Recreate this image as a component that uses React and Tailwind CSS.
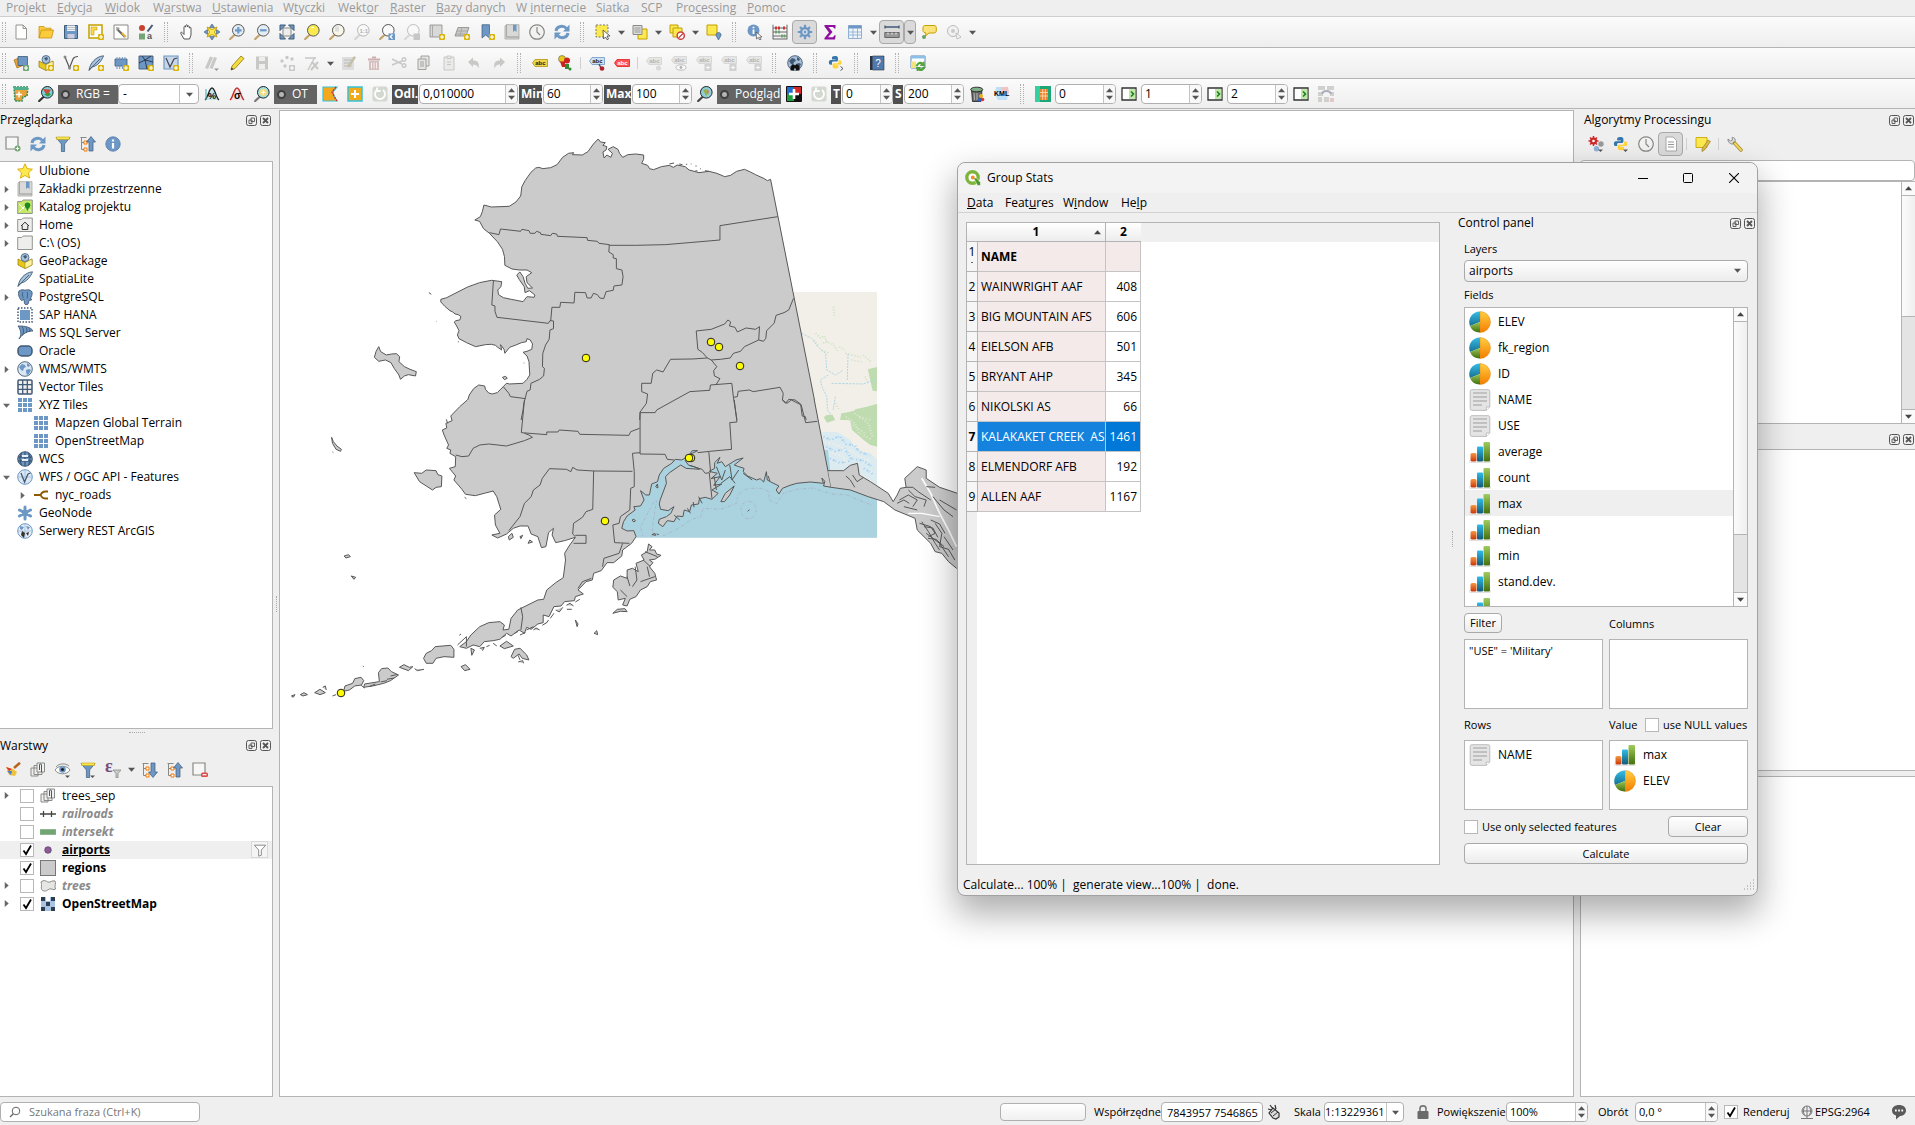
import React from "react";

/* ---------- icon parts ---------- */
const B = "#6d97c4";
const DB = "#415a75";
const Y = "#fce94f";
const YD = "#c4a000";
const G = "#c8c8c6";
const GD = "#888a85";

const Badge = ({ c = "#d8b40c" }) => (
  <g>
    <rect x="10" y="10" width="6" height="6" rx="1" fill={c} />
    <path d="M13 11v4M11 13h4" stroke="#fff" strokeWidth="1.2" />
  </g>
);
const Lens = ({ fill = "#fff", handle = "#c4a26a", stroke = "#555753", children }) => (
  <g>
    <path d="M6 10.5 1.2 15" stroke={handle} strokeWidth="2.2" strokeLinecap="round" />
    <circle cx="9.3" cy="6.3" r="5.8" fill={fill} stroke={stroke} strokeWidth="1" />
    {children}
  </g>
);
const Tag = ({ fill, stroke, color = "#222", y = 3 }) => (
  <g>
    <path d={`M.5 ${y + 4} 3 ${y}.5H15.5V${y + 7.5}H3Z`} fill={fill} stroke={stroke} strokeWidth=".8" />
    <text x="3.2" y={y + 6} fontSize="6" fontWeight="700" fill={color} fontFamily="Liberation Sans, sans-serif">abc</text>
  </g>
);
const Globe = ({ fill = "#dbe7f3", land = B }) => (
  <g>
    <circle cx="8" cy="8" r="7.3" fill={fill} stroke={DB} strokeWidth=".9" />
    <path d="M2 6l3-3 3 1 1 2-2 1-1 3-2-1ZM9 9l3-1 2 1-2 4-2 1-1-3ZM10 2l3 2-1 2-2-1Z" fill={land} />
  </g>
);
const Grid9 = () => (
  <g fill={B}>
    {[1, 6, 11].map((x) => [1, 6, 11].map((y) => <rect key={`${x}-${y}`} x={x} y={y} width="4" height="4" />))}
  </g>
);
const Sub = () => <path d="M10 13.500h5l-2.500 2.500z" fill="#555" />;
const Reload = ({ c = B }) => (
  <g fill="none" stroke={c} strokeWidth="3">
    <path d="M2 7C2.600 2 9.500 1 12.300 4.400" />
    <path d="M14 9C13.400 14 6.500 15 3.700 11.600" />
    <path d="M15.500 .5v7H9zM.5 15.500V8.500H7z" fill={c} stroke="none" />
  </g>
);
const FunnelI = () => (
  <g>
    <path d="M1 1.500h14L9.600 8v7.500H6.400V8Z" fill={B} stroke={DB} strokeWidth=".7" />
    <path d="M1.500 1h13v2.400h-13z" fill={Y} stroke={YD} strokeWidth=".6" />
  </g>
);
const TreeArrow = ({ up }) => (
  <g>
    <path d="M.5 1.500h6M1.500 1.500v12H5M1.500 6.500H5" fill="none" stroke={GD} />
    <path d="M4 5h3v3H4zM4 12h3v3H4z" fill="#fff" stroke="#f57900" />
    {up ? <path d="M11 .5 15.500 6H13v9H9V6H6.500Z" fill={B} stroke={DB} strokeWidth=".7" /> : <path d="M11 15.500 15.500 10H13V1H9v9H6.500Z" fill={B} stroke={DB} strokeWidth=".7" />}
  </g>
);
const Python = () => (
  <g>
    <path d="M8 1c-3 0-3.500 1-3.500 2.300V5h4v.7H3C1.500 5.700 1 7 1 8.500S1.600 11 3 11h1.500V9c0-1 .8-1.500 1.700-1.500h3.500c.9 0 1.600-.6 1.600-1.500V3.300C11.300 1.600 10 1 8 1Z" fill="#3776ab" />
    <path d="M8.500 15.500c3 0 3.400-1 3.400-2.300v-1.500H8V11h5.500c1.300 0 1.900-1.200 1.900-2.700S14.800 6 13.500 6H12v1.800c0 1-.8 1.600-1.700 1.600H6.800c-.9 0-1.600.6-1.600 1.500v2.300c0 1.600 1.300 2.300 3.300 2.300Z" fill="#ffd43b" />
  </g>
);
const Clock = () => <path d="M8 .8a7.200 7.200 0 1 0 .01 0ZM8 3v5l3 3" fill="#f2f2f2" stroke={GD} strokeWidth="1.200" />;
const Folder = () => <path d="M.7 2.500h4l1.500-1.500H15.300V14.500H.7Z" fill="#eeeeec" stroke={GD} strokeWidth=".9" />;
const Book = () => (
  <g>
    <path d="M1 2 2.500.7V13H15v2H1ZM2.500.7H15V13H2.500z" fill="#d9d9d7" stroke="#a5a5a3" strokeWidth=".8" />
    <path d="M9 .7h3.500V8l-1.800-1.600L9 8Z" fill={B} />
  </g>
);
const Feather = () => <path d="M1 15.500C2 8 8 1.500 15.500.8 14 5 10 11 4 12ZM1.200 15 12 4" fill="#a9c3df" stroke={DB} strokeWidth=".9" />;
const Cube = () => (
  <g>
    <path d="M1 6l7 3.500L15 6v6l-7 3.500L1 12Z" fill="#e8c81e" stroke="#8f7700" strokeWidth=".7" />
    <path d="M8 9.500 15 6v6l-7 3.500Z" fill="#fff3a0" stroke="#8f7700" strokeWidth=".5" />
    <circle cx="8" cy="4.500" r="4" fill="#a9c3df" stroke={DB} strokeWidth=".8" />
    <path d="M6 3l3-1 1 2-2 2Z" fill={DB} />
  </g>
);

const ICONS = {
  doc: <path d="M3 1h7l3.500 3.500V15H3ZM10 1v3.500h3.500" fill="#fff" stroke={GD} strokeWidth=".9" />,
  folderY: <path d="M1 14V2.500h5l1.500 1.700H13v2M1 14 3.500 6H15.500L13.500 14Z" fill="#fbcb3c" stroke="#c9920e" strokeWidth=".8" />,
  save: <g><path d="M1.500 1.500h13v13h-13z" fill={B} stroke={DB} /><path d="M4 1.500h8V7H4z" fill="#eef3f8" /><path d="M4.500 10h7v4.500h-7z" fill="#ccd" /><path d="M4 3.500h8M4 5.500h8" stroke="#aaa" strokeWidth=".7" /></g>,
  layout: <g><path d="M1 1h13v13H1z" fill="#fff" stroke={YD} strokeWidth="1.500" /><path d="M3 3h6v3H6v5H3z" fill="#fcd94b" stroke={YD} strokeWidth=".6" /><Badge /></g>,
  layouts: <g><path d="M1 1h14v14H1z" fill="#fff" stroke={GD} /><path d="M4 5l8 8" stroke="#666" strokeWidth="2.200" /><path d="M3 3l4 1-3 3z" fill="#999" /><path d="M9 9l4 4" stroke="#e8b93c" strokeWidth="2" /></g>,
  style: <g><circle cx="4" cy="4" r="3" fill="#c5432c" /><path d="M14.500 1 9.500 7.500" stroke={DB} strokeWidth="2" /><path d="M1 9.500h6v6H1z" fill="#73a473" /><text x="9" y="15" fontSize="9" fontWeight="700" fill="#555" fontFamily="Liberation Sans, sans-serif">a</text></g>,
  hand: <path d="M5 15 1.800 9.500c-.6-1.200.7-1.800 1.500-.8L5 10.500V3.200c0-1.300 1.700-1.300 1.700 0V1.800c0-1.300 1.800-1.300 1.800 0v1c0-1.200 1.800-1.200 1.800 0v1.400c0-1.200 1.700-1.200 1.700 0V11l-1.500 4Z" fill="#fff" stroke="#444" strokeWidth=".9" />,
  pan: <g><path d="M8 0l2.500 3.500h-5zM8 16l2.500-3.500h-5zM0 8l3.500-2.500v5zM16 8l-3.500-2.500v5z" fill={B} stroke={DB} strokeWidth=".6" /><path d="M3 3l5 2.500L13 3l-2.500 5 2.500 5L8 10.500 3 13l2.500-5Z" fill={Y} stroke={YD} strokeWidth="1" /></g>,
  zin: <Lens fill="#e4edf6"><path d="M9.300 3v6.600M6 6.300h6.600" stroke={B} strokeWidth="2.200" /></Lens>,
  zout: <Lens fill="#e4edf6"><path d="M6 6.300h6.600" stroke={B} strokeWidth="2.200" /></Lens>,
  zfull: <g><path d="M4 4h8v8H4z" fill="#eee" stroke={GD} /><path d="M1 1h5.500L1 6.500zM15 1v5.500L9.500 1zM1 15V9.500L6.500 15zM15 15H9.500L15 9.500z" fill={B} stroke={DB} strokeWidth="1" /></g>,
  zsel: <Lens fill={Y}><path d="M7 3.500h3" stroke="#fff" /></Lens>,
  zlay: <Lens fill="#f8f6e6"><path d="M6 2.500h4v5H6z" fill="#ddd" /></Lens>,
  z11: <g opacity=".4"><Lens handle="#aaa"><text x="5.500" y="8.500" fontSize="6" fontWeight="700" fill="#444" fontFamily="Liberation Sans, sans-serif">1:1</text></Lens></g>,
  zlast: <g><Lens fill="#fafafa" /><path d="M9.500 9.500h6.500v6.500H9.500z" fill={B} /><path d="M13.500 10.500l-2.200 2.200 2.200 2.200" fill="none" stroke="#fff" strokeWidth="1.300" /></g>,
  znext: <g opacity=".35"><Lens handle="#aaa" /><path d="M9.500 9.500h6.500v6.500H9.500z" fill="#777" /></g>,
  nview: <g><path d="M1 1h12v12H1z" fill="#d9d9d7" stroke={GD} strokeWidth=".8" /><path d="M3.500 1v12" stroke="#aaa" /><Badge /></g>,
  n3d: <g><path d="M4 3.500h11L12 12H1Z" fill="#c9c9c7" stroke={GD} strokeWidth=".8" /><path d="M3 7h11M2 10h11M8 3.500 6 12" stroke="#999" strokeWidth=".6" /><Badge /></g>,
  nbm: <g><path d="M3 .7h7.500V14L6.700 11 3 14Z" fill={B} stroke={DB} strokeWidth=".7" /><Badge /></g>,
  book: <Book />,
  clock: <Clock />,
  reload: <Reload />,
  selrect: <g><path d="M1 1h12v12H1z" fill={Y} stroke="#777" strokeDasharray="2 1.500" /><path d="M8 6l7 6h-3l1.500 3-1.500.7L10.500 13 8.500 15Z" fill="#fff" stroke="#444" strokeWidth=".8" /></g>,
  selform: <g><path d="M6 5h9v10H6z" fill={Y} stroke={YD} /><path d="M1 1.500h9v9H1z" fill="#ddd" stroke={GD} /><path d="M2.500 4h6M2.500 6h6M2.500 8h6" stroke={GD} strokeWidth=".8" /></g>,
  desel: <g><path d="M1 1h8v8H1z" fill={Y} stroke={YD} /><path d="M4 4h9v9H4z" fill={Y} stroke={YD} /><circle cx="11.700" cy="11.700" r="3.600" fill="#fff" stroke="#cc4444" strokeWidth="1.500" /><path d="M9.500 14 14 9.500" stroke="#cc4444" strokeWidth="1.300" /></g>,
  selloc: <g><path d="M1 1h10v10H1z" fill={Y} stroke={YD} /><path d="M12.500 8.500c2 0 3 1.800 2.400 3.200L12.500 16l-2.400-4.300c-.6-1.400.4-3.200 2.400-3.200Z" fill={B} stroke={DB} strokeWidth=".6" /></g>,
  ident: <g><circle cx="6.500" cy="6.500" r="6" fill={B} /><path d="M6.500 5.500V10M6.500 2.700v1.600" stroke="#fff" strokeWidth="1.800" /><path d="M9 8l6 5-2.500.2L14 15.500l-1.400.5-1.300-2.600L9.600 15Z" fill="#fff" stroke="#444" strokeWidth=".7" /></g>,
  calc: <g><path d="M1 .7v14.600M15 .7v14.600M1 4h14M1 8h14M1 12h14M1 15h14" stroke="#666" fill="none" /><path d="M4 2.500v3M7 2.500v3M12 2.500v3" stroke="#cc3333" strokeWidth="2" /><path d="M4 6.500v3M7 6.500v3M10 10.500v3M12.500 10.500v3" stroke="#6aa06a" strokeWidth="1.800" /></g>,
  gear: <g><circle cx="8" cy="8" r="5" fill={B} /><path d="M8 .8v14.400M.8 8h14.400M3 3l10 10M13 3 3 13" stroke={B} strokeWidth="2.200" /><circle cx="8" cy="8" r="3.300" fill="#c8d8ea" stroke="#4f79a8" strokeWidth=".6" /><circle cx="8" cy="8" r="1.200" fill={B} /></g>,
  sigma: <path d="M2.500 1h11v3.500h-1.300L11 3H6.500l4 5-4.500 5.200h5l1.500-2h1.200L13 15.500H2.500V14L7 8.500 2.500 2.500Z" fill="#8f0f9f" />,
  table: <g><path d="M1.500 1.500h13v13h-13z" fill="#eef4fa" stroke="#8fb0d3" /><path d="M1.500 1.500h13v3h-13z" fill={B} /><path d="M1.500 8h13M1.500 11h13M6 4v10.500M10.500 4v10.500" stroke="#8fb0d3" strokeWidth=".9" /></g>,
  ruler: <g><path d="M1 3h14M1 1.500v3M15 1.500v3" stroke={DB} strokeWidth="1.300" /><path d="M.8 8.500h14.400v5H.8z" fill="#999" stroke="#666" /><path d="M4 8.500v2M8 8.500v2M12 8.500v2" stroke="#eee" /></g>,
  tip: <g><path d="M4 1.500h9c1.500 0 2.300 1 2.300 2.200v3c0 1.200-.8 2.300-2.300 2.300H8L4.500 12 5 9C3.500 9 2 8 2 6.700v-3C2 2.500 2.800 1.500 4 1.500Z" fill="#fbe27a" stroke={YD} /><circle cx="3" cy="13" r="2" fill="#6aa06a" /></g>,
  zgear: <g opacity=".4"><circle cx="7" cy="7" r="5.500" fill="#eee" stroke="#666" /><circle cx="7" cy="7" r="2" fill="#888" /><path d="M10 9l5 4-4 2z" fill="#fff" stroke="#444" strokeWidth=".7" /></g>,

  addlay: <g><path d="M1 5l7-3 3 8-7 3Z" fill="#e8a33a" stroke="#a86a10" strokeWidth=".7" /><path d="M5 1.500h9.500v9H5z" fill={B} stroke={DB} strokeWidth=".8" /><Badge c="#73a473" /></g>,
  cube: <g><Cube /><Badge /></g>,
  vadd: <g><path d="M2 2l4.500 11L10 4c1-2 2-2.500 5-2.500" fill="none" stroke="#555" strokeWidth="1.200" /><circle cx="2" cy="2" r="1.500" fill="#888" /><circle cx="6.500" cy="13" r="1.500" fill="#888" /><Badge /></g>,
  featheradd: <g><Feather /><Badge /></g>,
  memadd: <g><path d="M2 4h12v7H2z" fill={B} stroke={DB} strokeWidth=".8" /><path d="M4 2v12M6.700 2v12M9.400 2v12M12 2v12" stroke={B} strokeWidth="1" /><Badge /></g>,
  meshadd: <g><path d="M1 1h14v13H1z" fill={B} stroke={DB} strokeWidth=".9" /><path d="M1 8l6-3 8 2M7 5l2 9M4 1l3 4 6-4" stroke="#223" strokeWidth=".8" fill="none" /><Badge /></g>,
  vadd2: <g><path d="M1 1h14v13H1z" fill="#c7d7e8" stroke={B} strokeWidth="1.200" /><path d="M3 3l4 9 4-8 3-1" fill="none" stroke="#445" strokeWidth="1.200" /><Badge /></g>,
  edits: <g><path d="M1 13 6 1.500l3 1L4 14ZM5.500 13l4.500-11 3 1-4.500 11Z" fill={G} /><path d="M10 13.500h5l-2.500 2.500z" fill="#999" /></g>,
  pencil: <g><path d="M3 11 12 1l3 2.500-9 10L2 15Z" fill="#f4dc3c" stroke="#8a7a10" strokeWidth=".8" /><path d="M2 15l.5-2.500L4.500 14Z" fill="#333" /></g>,
  saveG: <g><path d="M2 1.500h12v13H2z" fill={G} /><path d="M5 2h6v4H5zM5 9h6v5H5z" fill="#eee" /></g>,
  addpt: <g><circle cx="3" cy="6" r="1.700" fill={G} /><circle cx="8" cy="2.500" r="1.700" fill={G} /><circle cx="13" cy="4" r="1.700" fill={G} /><circle cx="6" cy="11" r="1.700" fill={G} /><Badge c={G} /></g>,
  vertex: <g><path d="M1 3h11M4 15 11 2" stroke={G} strokeWidth="1.500" /><path d="M8 7l6 7M14 7l-7 8" stroke={G} strokeWidth="2" /></g>,
  modattr: <g><path d="M1 2h12v13H1z" fill="#ddd" /><path d="M3 5h8M3 8h8M3 11h8" stroke="#bbb" /><path d="M6 11 13 1l2 1.500L8 13Z" fill="#c5c0a8" /></g>,
  bin: <g><path d="M2 3.500h12v2H2z" fill="#cfb0b0" /><path d="M3 6h10v9H3z" fill="#d6bfbf" /><path d="M6 1.500h4v2H6z" fill="#cfb0b0" /><path d="M5.500 7.500v6M8 7.500v6M10.500 7.500v6" stroke="#f5eeee" /></g>,
  cut: <g fill="none" stroke={G} strokeWidth="1.400"><path d="M1 4l10 5M1 10l10-4" /><circle cx="13" cy="4.500" r="1.800" /><circle cx="13" cy="10.500" r="1.800" /></g>,
  copy: <g fill="#e4e4e2" stroke="#9a9a98" strokeWidth=".9"><path d="M5 1h8v10H5z" /><path d="M2 4h8v10.500H2z" /><path d="M4 7h4M4 9h4M4 11h4" /></g>,
  paste: <g fill="#eaeae8" stroke={G}><path d="M3 2h10v13H3z" /><path d="M6 1h4v2.500H6z" /><path d="M6 7h4M6 9.500h4" /></g>,
  undo: <path d="M2 7l5-4.500v3c5 0 6.500 2.500 5.500 8-1-3-2.500-4-5.500-4v2.500Z" fill={G} />,
  redo: <path d="M14 7 9 2.500v3c-5 0-6.500 2.500-5.500 8 1-3 2.500-4 5.500-4v2.500Z" fill={G} />,
  abcY: <Tag fill="#f0d64a" stroke="#b09410" y={4} />,
  diag: <g><circle cx="5" cy="4" r="3.500" fill="#e8c81e" stroke="#444" strokeWidth=".5" /><circle cx="10" cy="5.500" r="3" fill="#cc2222" /><path d="M3 6.500h5V12H5z" fill="#cc2222" /><path d="M8 9h4v5H8z" fill="#2e8b2e" /><circle cx="13" cy="14" r="1.500" fill="#2e8b2e" /></g>,
  abcB: <g><Tag fill="#cfe0f2" stroke={B} y={2} /><path d="M10 9l2 4" stroke={DB} strokeWidth="1.500" /><circle cx="13" cy="13.500" r="2.300" fill="#b3202c" /></g>,
  abcR: <Tag fill="#ff5252" stroke="#e02020" color="#fff" y={4} />,
  abcG: <g opacity=".6"><Tag fill="#dcdcd8" stroke="#bbb" color="#888" y={2} /><circle cx="12.500" cy="13" r="2.500" fill={G} /></g>,
  abcE: <g opacity=".6"><Tag fill="#dcdcd8" stroke="#bbb" color="#888" y={1} /><ellipse cx="10" cy="12.500" rx="5" ry="2.700" fill="#fff" stroke="#999" /><circle cx="10" cy="12.500" r="1.400" fill="#888" /></g>,
  abcS: <g opacity=".6"><Tag fill="#dcdcd8" stroke="#bbb" color="#888" y={1} /><rect x="8.500" y="9" width="7" height="7" fill="#bbb" /><path d="M10 12.500h4M12 10.500v4" stroke="#fff" /></g>,
  bino: <g><Globe fill="#a9bfd6" land={DB} /><path d="M3.500 15.500v-4l2-2h1.500l1 1 1-1h1.500l2 2v4H9v-2H7v2Z" fill="#111" /></g>,
  pyc: <g><g transform="scale(.88)"><Python /></g><path d="M12.500 11.500l2.500 2-2.500 2" fill="none" stroke="#555" /></g>,
  help: <g><path d="M1 1h2.500v14H1z" fill="#2b3340" /><path d="M3.500 1H15v14H3.500z" fill="#4e7ab0" stroke="#2b3340" strokeWidth=".6" /><text x="6.300" y="11.500" fontSize="10" fill="#fff" fontFamily="Liberation Sans, sans-serif">?</text></g>,
  tabref: <g><path d="M1 1h14v12H1z" fill="#fff" stroke="#5b87bd" /><path d="M1 1h14v2.500H1z" fill="#8cc0e8" /><path d="M1 6.500h5V13H1z" fill="#f5e27a" /><path d="M6 11c1-4 5-5 7-3l1-1.500.5 4.500-4.500-.5 1.500-1c-1.500-1-3-.5-4 1.500ZM15 12c-1 4-5 5-7 3l-1 1-.5-4 4 .5-1.300 1c1.500 1 3 .5 4-1.500Z" fill="#4fae2e" stroke="#2a7a14" strokeWidth=".4" /></g>,

  scp: <g><path d="M1 1h14l-1 9-4 1-1 4H2Z" fill="#e8a33a" stroke="#2e8b57" strokeWidth="1.500" strokeDasharray="2 1" /><path d="M1 1h14v3H1z" fill="#4fb08a" /><path d="M6 5.500v6M3 8.500h6" stroke="#fff" strokeWidth="1.500" /></g>,
  scpz: <Lens fill="#7ad0dc" stroke="#222" handle="#333"><path d="M5 3l8 .5L9 10Z" fill="#d24a3a" /><path d="M6 8.500l5-2 2 2-3 2z" fill="#3b9a48" /></Lens>,
  cum: <g><path d="M1 14C4 12 5 2 8 2s4 10 7 12" fill="#c6e6ea" stroke="#222" strokeWidth="1.300" /><text x="4" y="13" fontSize="9" fontWeight="700" fontFamily="Liberation Sans, sans-serif">%</text><path d="M2 3v11" stroke="#3aa" /></g>,
  std: <g><path d="M1 14C4 12 5 2 8 2s4 10 7 12" fill="#f7e0e0" stroke="#c03030" strokeWidth="1.500" /><text x="5" y="13" fontSize="10" fontWeight="700" fontFamily="Liberation Sans, sans-serif">σ</text></g>,
  roiz: <Lens fill="#9fe0e6" stroke="#222" handle="#777"><circle cx="9.300" cy="6.300" r="3.600" fill="#f5dc7a" /><path d="M9.300 4.200v4.200M7.200 6.300h4.200" stroke="#fff" /></Lens>,
  roi: <g><path d="M1 1h14l-4 5 1 4 3 5H1Z" fill="#f5a81c" stroke="#35c3dd" strokeWidth="1.200" /><path d="M14 1l-4 5 2 4 3 5" fill="none" stroke="#d22" strokeWidth="1.300" strokeDasharray="2 1" /></g>,
  plus: <g><rect x="1" y="1" width="14" height="14" fill="#f0aa1a" stroke="#35c3dd" strokeWidth="1.500" /><path d="M8 4v8M4 8h8" stroke="#fff" strokeWidth="2" /></g>,
  redoG: <g><rect x=".5" y=".5" width="15" height="15" rx="2" fill="#d3d8d0" /><path d="M5 4a5 5 0 1 0 6 0M5 1.500V5h3.500" fill="none" stroke="#fff" strokeWidth="1.800" /></g>,
  prevz: <Lens fill="#8fd0d8" stroke="#222" handle="#444"><path d="M6 4l3-1 3 3-3 4Z" fill="#9ab04a" /><path d="M10 3l2 2-1 4z" fill="#c77" /></Lens>,
  rgbp: <g><path d="M1 1h7v7H1z" fill="#1f6fd0" /><path d="M8 1h7v7H8z" fill="#d22828" /><path d="M1 8h7v7H1z" fill="#20a040" /><path d="M8 8h7v7H8z" fill="#111" /><path d="M8 3v10M3 8h10" stroke="#fff" strokeWidth="2.600" /><path d="M.5.5h15v15H.5z" fill="none" stroke="#111" /></g>,
  trash: <g><path d="M2.500 4h10.500l-1 11.500H3.500Z" fill="#666" stroke="#222" strokeWidth=".8" /><ellipse cx="7.700" cy="3.500" rx="6" ry="2.300" fill="#7fb08a" stroke="#222" strokeWidth=".9" /><path d="M5 7l.5 7M8 7v7" stroke="#bbb" /><circle cx="12" cy="10" r="2" fill="#e8b01e" /><circle cx="13.500" cy="13.500" r="1.800" fill="#d33" /><circle cx="10.500" cy="14" r="1.800" fill="#2a62c8" /></g>,
  kml: <g><path d="M2 1h10l3 4-2 9H4L1 9Z" fill="#bfe0f5" /><path d="M7 1h7l1 6-6 2z" fill="#f3c2c2" /><text x="0" y="10" fontSize="7" fontWeight="700" fontFamily="Liberation Sans, sans-serif">KML</text></g>,
  raster: <g><path d="M0 0h16v16H0z" fill="#1fa57a" /><path d="M0 0h5v16H0z" fill="#35d0a0" /><path d="M5 3h8v11H5z" fill="#f08030" /><path d="M5 6.500h8M5 10h8M7.700 3v11M10.400 3v11" stroke="#ffd9a8" strokeWidth=".9" /></g>,
  goto: <g><path d="M1 2h14v12H1z" fill="#fff" stroke="#333" strokeWidth="1.300" /><path d="M8 3h6.300v10H8z" fill="#bfe8a8" /><path d="M10 5.500 12.500 8 10 10.500" fill="none" stroke="#1c7a1c" strokeWidth="1.500" /></g>,
  rasterG: <g><path d="M0 0h7v4H0zM9 0h7v4H9zM0 6h5v4H0zM6 11h5v5H6zM12 6h4v4h-4zM0 11h4v5H0z" fill="#d0d0ce" /><path d="M4 8c1-4 8-4 9 0" fill="none" stroke="#aaaeb8" strokeWidth="2" /><path d="M12 12h4v4h-4z" fill="#e2c8c8" /></g>,

  addL: <g><path d="M1 1h12v12H1z" fill="#f7f7f7" stroke={GD} strokeWidth="1.200" /><circle cx="12.500" cy="12.500" r="3" fill="#73a473" /><path d="M12.500 10.800v3.400M10.800 12.500h3.400" stroke="#fff" /></g>,
  funnel: <FunnelI />,
  expand: <TreeArrow />,
  collapse: <TreeArrow up />,
  info: <g><circle cx="8" cy="8" r="7.200" fill={B} stroke="#5279a8" strokeWidth=".8" /><path d="M8 7v5.500M8 3.500v2" stroke="#fff" strokeWidth="2.200" /></g>,
  star: <path d="M8 .8l2.200 4.800 5.200.6-3.900 3.600 1.100 5.300L8 12.500l-4.600 2.600 1.100-5.300L.6 6.200l5.200-.6Z" fill={Y} stroke="#d8a800" strokeWidth=".9" />,
  katalog: <g><path d="M.7 2.500h4l1.500-1.500H15.300V14.500H.7Z" fill="#c5e86c" stroke={GD} strokeWidth=".9" /><path d="M2 13 8 7 14 12M2 5l5 5" stroke="#fff" strokeWidth=".9" fill="none" /><circle cx="10.500" cy="6.300" r="2.800" fill="#1f8a1f" /><path d="M8.500 8l2 4 2-4z" fill="#1f8a1f" /></g>,
  home: <g><Folder /><path d="M4 9l4-3.800L12 9M5.200 8.500v4h5.600v-4" fill="none" stroke="#333" /></g>,
  folder: <Folder />,
  gpkg: <Cube />,
  feather: <Feather />,
  pg: <g><path d="M2 2C4 .5 7 .5 8 1.300 10 .5 14 .5 15 3c.6 2-.5 5-2 7l2 .3c-.8 1-2 1.200-3 1L11 15c-.8 1-3 1-3.500-.5L7 10.500 4.500 11.500C2.500 10 .5 4.500 2 2Z" fill={B} stroke={DB} strokeWidth=".9" /><path d="M6 3c-1 2-1 4 .5 6M10 3c1 2 .5 4 0 6.500" fill="none" stroke={DB} strokeWidth=".9" /></g>,
  hana: <g><rect x="3" y="3" width="10" height="10" fill={B} /><rect x="1" y="1" width="14" height="14" fill="none" stroke={DB} strokeWidth="1.500" strokeDasharray="1.500 1.500" /></g>,
  mssql: <path d="M1 1c7 0 13 1 15 5-5 0-10 2-14 8 3-4 2-9-1-13ZM5 1.500c2 3 2 6 .5 9M9 2.500c1.500 2 1 4 0 5.500M12 3.500c1 1 .8 2.500.3 3.300" fill={B} stroke={DB} strokeWidth=".9" />,
  oracle: <rect x="1" y="3" width="14" height="10" rx="4" fill={B} stroke={DB} strokeWidth="1.500" />,
  wms: <Globe />,
  vt: <g><rect x="1" y="1" width="14" height="14" rx="1" fill="#eee" stroke={DB} strokeWidth="1.500" /><path d="M5.700 1v14M10.300 1v14M1 5.700h14M1 10.300h14" stroke={DB} strokeWidth="1.300" /></g>,
  xyz: <Grid9 />,
  wcs: <g><circle cx="8" cy="8" r="7.300" fill={B} stroke={DB} /><path d="M1 6h14M1 10h14M8 1v14M4.500 2c-2 4-2 8 0 12M11.500 2c2 4 2 8 0 12" fill="none" stroke={DB} strokeWidth="1.300" /><path d="M5 4h6v2H5zM5 8h6v2H5z" fill="#e8f0f8" /></g>,
  wfs: <g><circle cx="8" cy="8" r="7.300" fill="#dbe7f3" stroke={B} /><path d="M1 8h14M8 1v14" stroke="#a9c3df" /><path d="M4 4l3.500 9L11 5l2.500-1" fill="none" stroke={DB} strokeWidth="1.300" /></g>,
  conn: <path d="M1 8h6M15 4.500h-3c-3 0-3.500 1.500-4.500 3.500 1 2 1.500 3.500 4.500 3.500h3" fill="none" stroke="#8f5902" strokeWidth="1.800" />,
  geonode: <g stroke={B} strokeWidth="3" strokeLinecap="round"><path d="M8 2v12M2.500 5l11 6M13.500 5l-11 6" /><circle cx="8" cy="8" r="1.500" fill={B} /></g>,
  arcgis: <g><circle cx="8" cy="8" r="7.300" fill="#e6eef7" stroke={B} /><path d="M1 8h14M8 1v14" stroke="#a9c3df" /><path d="M3 3l4 1-2 3-2-1zM9 3l4 1-2 3Z" fill={B} /><path d="M5 8l3 2-1 5-3-3ZM9 10l3-1-1 4Z" fill="#333" /></g>,

  brush: <g><path d="M9 6 15 .8" stroke="#b5651d" strokeWidth="2.500" /><path d="M1 5l7 2 4 3-2 4-6-1Z" fill="#f0c23c" /><path d="M1 5l6 2-3 2Z" fill="#d33" /><path d="M2 9l5 0-1 4Z" fill="#4a7ed0" /></g>,
  group: <g><path d="M1 6h7v8H1zM4 3.500h8v9H4z" fill="#eee" stroke={GD} /><path d="M7 1h7.500v9H7z" fill="#f2f2f2" stroke={GD} /><path d="M9.500 8V3c0-1.500 2-1.500 2 0v7" fill="none" stroke={DB} /></g>,
  eye: <g><path d="M0 8c3-5 12-5 15 0-3 5-12 5-15 0Z" fill="#fff" stroke={GD} /><circle cx="7.500" cy="7.500" r="3.300" fill={B} /><circle cx="7.500" cy="7.500" r="1.600" fill="#222" /><path d="M1 5c3-4 10-4 13-1" fill="none" stroke={GD} /><Sub /></g>,
  funnelA: <g><FunnelI /><Sub /></g>,
  eps: <g><text x="0" y="10" fontSize="18" fontWeight="700" fill="#75507b" fontFamily="Liberation Serif, serif">ε</text><path d="M8 8h8l-3 3.500V16h-2v-4.500Z" fill="#ccc" stroke={GD} strokeWidth=".8" /></g>,
  remove: <g><path d="M1 1h12v12H1z" fill="#f7f7f7" stroke={GD} strokeWidth="1.200" /><rect x="9" y="10.500" width="7" height="4.500" rx="1.500" fill="#e04b4b" /><path d="M10.500 12.700h4" stroke="#fff" strokeWidth="1.200" /></g>,
  rail: <path d="M0 8h16M3.500 5v6M11.500 5v6" stroke="#444" strokeWidth="1.300" />,
  line: <rect x="0" y="5.500" width="16" height="5" fill="#73a473" stroke="#8db88d" />,
  dot: <circle cx="8" cy="8" r="3.300" fill="#8c5b96" stroke="#5e3a66" strokeWidth=".7" />,
  fill: <rect x=".5" y=".5" width="15" height="15" fill="#cbcbcb" stroke="#777" />,
  poly: <path d="M1 4c3-2.500 5-1 7 0s4-2 7-1c1.500 2-1 5 .5 8-2 2-4-1-6 0s-4 3-7 1.500C0 10 2.500 8 1 4Z" fill="#e6e6e4" stroke={GD} />,
  rasterL: <g><path d="M1 1h14v14H1z" fill="#aac4e2" /><path d="M1 1h4v4H1zM11 1h4v4h-4zM6 6h4v4H6zM1 11h4v4H1zM11 11h4v4h-4z" fill="#2c3e54" /><path d="M6 1h4v4H6z" fill="#fff" /></g>,
  funnelO: <path d="M1.500 2.500h13L9.500 8v6l-3 1V8Z" fill="#fff" stroke="#888" strokeWidth="1.100" />,

  gears: <g><circle cx="5.500" cy="5" r="3.500" fill="#cc2a2a" /><path d="M5.500 0v10M.5 5h10M2 1.500l7 7M9 1.500l-7 7" stroke="#cc2a2a" strokeWidth="1.500" /><circle cx="5.500" cy="5" r="1.300" fill="#fff" /><circle cx="13" cy="8" r="2.700" fill="#999" /><circle cx="8.500" cy="12.700" r="2.700" fill="#8fb0d8" /><Sub /></g>,
  py: <g><g transform="scale(.92)"><Python /></g><Sub /></g>,
  docG: <g><path d="M3 1h7l3.500 3.500V15H3Z" fill="#fff" stroke="#a8a8a8" /><path d="M5 6h6M5 8.500h6M5 11h6" stroke="#999" /></g>,
  note: <g><path d="M1 1.500h11v10H1z" fill={Y} stroke={YD} strokeWidth=".8" /><path d="M7 13 13 4l2.500 1.500L9.500 14 7 15.500Z" fill="#e0b84a" stroke="#8a7a10" strokeWidth=".6" /></g>,
  wrench: <g><path d="M1 3l2.500 2 2-1L5 1.500c2-.5 4 1.500 3 4L6 8C3.500 8.500.5 6 1 3Z" fill="#ddd" stroke="#777" strokeWidth=".8" /><path d="M7.500 7 14 14" stroke="#a38a2a" strokeWidth="3.400" strokeLinecap="round" /><path d="M8 7.500 14 14" stroke="#f0d65a" strokeWidth="2" strokeLinecap="round" /></g>,
};

const Ico = ({ n, className = "h-4 w-4" }) => (
  <svg viewBox="0 0 16 16" className={`${className} shrink-0`} aria-hidden="true">{ICONS[n]}</svg>
);

/* ---------- toolbar parts ---------- */
const Slot = ({ n, pressed }) => (
  <button type="button" aria-label={n} className={`grid h-6 w-[25px] shrink-0 place-items-center rounded-sm ${pressed ? "border border-[#a9a9a9] bg-[#dadada]" : ""}`}>
    <Ico n={n} />
  </button>
);
const Tri = ({ dir = "down", className = "" }) => (
  <svg viewBox="0 0 8 8" className={`h-[7px] w-[7px] shrink-0 ${className}`} aria-hidden="true">
    <path d={dir === "down" ? "M0 2h8L4 6.500z" : dir === "up" ? "M0 6h8L4 1.500z" : "M2 0v8l4.500-4z"} fill="currentColor" />
  </svg>
);
const Arr = ({ pressed }) => (
  <button type="button" aria-label="więcej" className={`grid h-6 w-3 shrink-0 place-items-center text-[#555] ${pressed ? "rounded-sm border border-[#a9a9a9] bg-[#dadada]" : ""}`}>
    <Tri />
  </button>
);
const Grip = ({ first }) => (
  <div className={`flex shrink-0 items-center ${first ? "w-2 pl-[2px]" : "w-4 justify-center"}`}>
    <div className="h-5 w-[4px] border-x border-dotted border-[#b0b0b0]" />
  </div>
);
const Sep = () => <div className="mx-[3px] h-3 w-px shrink-0 bg-[#d0d0d0]" />;

const render = (list) =>
  list.map((n, i) => {
    if (n === "|") return <Grip key={i} />;
    if (n === "/") return <Sep key={i} />;
    if (n === "v") return <Arr key={i} />;
    if (n === "V") return <Arr key={i} pressed />;
    if (n.startsWith("*")) return <Slot key={i} n={n.slice(1)} pressed />;
    return <Slot key={i} n={n} />;
  });

const TB1 = ["doc", "folderY", "save", "layout", "layouts", "style", "|", "hand", "pan", "zin", "zout", "zfull", "zsel", "zlay", "z11", "zlast", "znext", "nview", "n3d", "nbm", "book", "clock", "reload", "|", "selrect", "v", "selform", "v", "desel", "v", "selloc", "|", "ident", "calc", "*gear", "sigma", "table", "v", "*ruler", "V", "tip", "zgear", "v"];
const TB2 = ["addlay", "cube", "vadd", "featheradd", "memadd", "meshadd", "vadd2", "|", "edits", "pencil", "saveG", "addpt", "vertex", "v", "modattr", "bin", "cut", "copy", "paste", "undo", "redo", "|", "abcY", "diag", "/", "abcB", "abcR", "/", "abcG", "abcE", "abcS", "abcS", "abcS", "|", "bino", "|", "pyc", "|", "help", "|", "tabref"];

const Spin = ({ label, value, w, h = "h-5" }) => (
  <div className={`flex ${h} ${w} shrink-0 overflow-hidden rounded-sm border border-[#b0b0b0] bg-white`}>
    <input aria-label={label} defaultValue={value} className="min-w-0 flex-1 bg-transparent pl-[3px] outline-none" />
    <div className="flex w-3 flex-col items-center justify-center border-l border-[#c4c4c4] bg-[#f8f8f8] text-[#555]">
      <Tri dir="up" />
      <Tri />
    </div>
  </div>
);
const Dark = ({ children, w }) => (
  <button type="button" className={`flex h-[19px] ${w} shrink-0 items-center gap-[6px] bg-[#646464] pl-[3px] text-white`}>
    <span className="h-[9px] w-[9px] shrink-0 rounded-full border-2 border-[#3f3f3f] bg-[#b5b5b5]" />
    <span className="whitespace-pre">{children}</span>
  </button>
);
const Lab = ({ children, w }) => (
  <span className={`flex h-[19px] ${w} mr-px shrink-0 items-center bg-[#505050] pl-[2px] font-bold whitespace-nowrap text-white`}>{children}</span>
);

const Hot = ({ t }) => {
  const i = t.indexOf("&");
  return <>{t.slice(0, i)}<span className="underline underline-offset-1">{t[i + 1]}</span>{t.slice(i + 2)}</>;
};
const MENU = [
  ["Pro&jekt", "w-[51px]"], ["&Edycja", "w-[48px]"], ["&Widok", "w-[48px]"], ["W&arstwa", "w-[59px]"], ["&Ustawienia", "w-[71px]"],
  ["W&tyczki", "w-[55px]"], ["Wekt&or", "w-[52px]"], ["&Raster", "w-[46px]"], ["&Bazy danych", "w-[80px]"], ["W &internecie", "w-[80px]"],
  ["Siatka&", "w-[45px]"], ["SCP&", "w-[35px]"], ["Pro&cessing", "w-[71px]"], ["&Pomoc", "w-[46px]"],
];

/* ---------- docks ---------- */
const DockButtons = () => (
  <div className="flex gap-[3px] text-[#555]">
    <button type="button" aria-label="odepnij">
      <svg viewBox="0 0 11 11" className="h-[11px] w-[11px]"><rect x=".5" y=".5" width="10" height="10" rx="2" fill="none" stroke="currentColor" /><path d="M5 3h3.500v3.500H5zM3 5h3v3.500H3z" fill="#eee" stroke="currentColor" strokeWidth=".9" /></svg>
    </button>
    <button type="button" aria-label="zamknij">
      <svg viewBox="0 0 11 11" className="h-[11px] w-[11px]"><rect x=".5" y=".5" width="10" height="10" rx="2" fill="none" stroke="currentColor" /><path d="M3 3l5 5M8 3 3 8" stroke="currentColor" strokeWidth="1.800" /></svg>
    </button>
  </div>
);
const Title = ({ children, className = "" }) => (
  <div className={`flex h-5 shrink-0 items-center justify-between ${className}`}><span>{children}</span><DockButtons /></div>
);

const TREE = [
  ["", "star", "Ulubione"], [">", "book", "Zakładki przestrzenne"], [">", "katalog", "Katalog projektu"], [">", "home", "Home"], [">", "folder", "C:\\ (OS)"],
  ["", "gpkg", "GeoPackage"], ["", "feather", "SpatiaLite"], [">", "pg", "PostgreSQL"], ["", "hana", "SAP HANA"], ["", "mssql", "MS SQL Server"],
  ["", "oracle", "Oracle"], [">", "wms", "WMS/WMTS"], ["", "vt", "Vector Tiles"], ["v", "xyz", "XYZ Tiles"], ["", "xyz", "Mapzen Global Terrain", 1],
  ["", "xyz", "OpenStreetMap", 1], ["", "wcs", "WCS"], ["v", "wfs", "WFS / OGC API - Features"], [">", "conn", "nyc_roads", 1], ["", "geonode", "GeoNode"], ["", "arcgis", "Serwery REST ArcGIS"],
];
const Twist = ({ s }) => (
  <span className="w-[17px] shrink-0 pl-[3px] text-[#666]">{s === ">" ? <Tri dir="right" /> : s === "v" ? <Tri /> : null}</span>
);
const Check = ({ label, checked }) => (
  <span className="relative grid h-[14px] w-[14px] shrink-0 place-items-center">
    <input type="checkbox" aria-label={label} defaultChecked={checked} className="peer col-start-1 row-start-1 h-[14px] w-[14px] appearance-none border border-[#b8b8b8] bg-white" />
    <svg viewBox="0 0 14 14" className="pointer-events-none col-start-1 row-start-1 hidden h-[14px] w-[14px] peer-checked:block"><path d="M3.500 7.500 6 11l5-8.500" fill="none" stroke="#000" strokeWidth="1.800" /></svg>
  </span>
);
const OFF = "font-bold italic text-[#8a8a8a]";
const LAYERS = [
  [">", false, "group", "trees_sep", ""], ["", false, "rail", "railroads", OFF], ["", false, "line", "intersekt", OFF],
  ["", true, "dot", "airports", "font-bold underline"], ["", true, "fill", "regions", "font-bold"], [">", false, "poly", "trees", OFF], [">", true, "rasterL", "OpenStreetMap", "font-bold"],
];

const Scroll = ({ thumb, track }) => (
  <div className="flex w-[14px] shrink-0 flex-col border-l border-[#b4b4b4] bg-[#e4e4e4] text-[#444]">
    <button type="button" aria-label="w górę" className="grid h-[14px] place-items-center border-b border-[#b4b4b4] bg-[#fafafa]"><Tri dir="up" /></button>
    <div className={`${thumb} border-b border-[#b4b4b4] bg-gradient-to-r from-[#fbfbfb] to-[#efefef]`} />
    <div className={track} />
    <button type="button" aria-label="w dół" className="grid h-[14px] place-items-center border-t border-[#b4b4b4] bg-[#fafafa]"><Tri /></button>
  </div>
);

/* ---------- map ---------- */
const NORTH = "M500 840 504 825 515 806 528 795 543 798 545 808 553 819 562 822 575 818 590 800 598 790 606 792 640 790 650 778 657 765 655 725 650 708 640 697 650 694 662 688 664 672 658 660 650 656 648 665 636 668 620 676 606 682 594 700 592 688 583 674 586 690 576 682 570 676 560 673 545 674 520 680 497 668 478 656 474 645 478 632 472 618 466 606 470 602 480 600 483 590 476 584 468 582 462 576 455 572 443 560 432 546 432 538 447 533 475 516 500 501 530 488 560 481 586 485 584 500 576 510 578 524 590 533 610 538 640 545 650 530 668 532 670 525 656 512 645 518 643 500 630 478 624 465 632 456 640 470 645 490 652 505 664 504 650 488 648 470 662 458 650 450 630 450 612 447 594 436 593 410 588 388 575 365 555 340 540 326 530 304 518 300 532 290 537 275 541 255 560 261 605 259 622 246 634 228 637 200 645 182 660 157 672 144 680 142 690 146 710 143 726 134 740 112 755 100 768 98 765 104 790 105 804 95 818 72 830 57 836 66 848 68 842 76 852 80 850 90 842 96 845 114 852 105 862 112 866 100 855 88 868 80 880 88 884 100 892 112 905 104 925 102 945 105 945 118 940 130 955 136 960 146 970 149 990 140 1010 136 1020 142 1030 135 1050 140 1060 150 1085 158 1110 154 1130 160 1150 170 1165 166 1180 154 1200 148 1215 156 1228 164 1250 176 1258 182 1266 178 1377 840";
const NORTH_LINES = [
  "M555 338 579 344 583 327 634 334 637 328 655 332 658 340 670 340 674 334 684 338 685 343 710 347 714 340 725 342 727 349 802 353 803 361 828 364 832 370 858 374 857 396 868 404 868 414 876 416 876 446 890 450 893 470 890 495 870 498 868 511 850 515 844 536 834 534 828 524 818 520 812 534 802 534 798 518 771 517 769 549 735 547 733 562 713 562 710 602",
  "M858 376 925 376 1000 374 1060 368 1138 360 1138 317 1284 290",
  "M565 483 561 555 569 558 569 574 574 592 704 610 708 602 717 603 717 626 708 630 706 658 697 675 690 700 689 740 694 745 692 768 682 778 660 790 658 810 650 814 642 850 640 870 635 900",
  "M590 800 604 820 608 830 646 836",
  "M1324 535 1312 570 1300 578 1280 586 1275 610 1256 632 1254 655 1248 664 1236 660 1238 620 1228 628 1204 624 1182 636 1176 622 1162 618 1165 606 1158 600 1150 612 1116 628 1078 633 1082 688 1094 698 1106 714 1116 720 1140 718 1164 714 1172 700 1190 694 1200 680 1236 660",
  "M1106 714 1070 717 1013 718 1006 732 994 756 978 750 968 760 964 790 940 790 940 815 955 822 952 850 936 876 935 900",
  "M936 878 974 878 978 870 1062 815 1112 811 1114 795 1168 790 1172 832 1182 830 1184 814 1212 810 1222 815 1290 802 1298 820 1296 840 1304 850 1312 838 1328 840 1342 852 1346 888 1354 890 1356 900",
  "M1116 720 1130 740 1122 752 1124 768 1138 776 1128 794",
  "M1172 832 1181 900",
];
const SOUTH = "M1219 -2 1257 262 1240 258 1243 244 1236 234 1240 250 1210 246 1180 250 1165 256 1148 265 1140 282 1134 270 1140 258 1122 246 1114 240 1112 215 1106 246 1098 236 1090 240 1070 228 1060 215 1062 205 1050 200 1040 195 1060 174 1044 180 1020 200 1012 185 1002 190 1008 172 996 188 996 205 984 214 1002 220 988 236 1008 230 994 256 1012 252 990 270 1004 280 990 298 975 292 962 296 960 312 944 315 940 335 928 330 925 350 912 348 905 365 890 362 880 380 870 370 872 358 888 350 898 340 905 320 892 332 875 328 872 312 874 300 888 250 886 230 895 218 920 195 932 205 962 208 950 200 938 196 930 182 938 165 958 152 946 152 936 170 922 180 908 178 900 190 882 205 872 225 868 245 855 252 850 285 842 285 830 272 838 300 830 318 815 320 818 330 800 348 792 365 788 385 800 393 815 392 820 410 810 430 790 450 788 468 770 488 755 488 742 512 725 520 722 540 708 545 690 570 702 582 684 590 682 602 660 605 652 618 636 620 625 650 612 645 612 668 600 672 585 688 575 682 570 700 558 690 540 708 530 700 515 718 500 722 480 725 470 740 455 735 440 745 425 740 440 725 450 705 470 680 490 668 515 665 525 675 522 690 535 688 540 655 555 630 600 600 613 598 620 570 640 548 657 533 662 480 660 460 670 438 684 412 660 422 640 428 632 405 635 385 624 398 618 440 608 443 600 410 585 402 578 378 560 378 545 385 530 402 510 414 497 405 515 400 505 375 503 345 517 328 508 290 500 273 480 280 460 287 438 283 430 268 412 240 416 228 402 205 415 200 416 170 403 160 405 150 396 145 400 135 390 105 386 90 396 84 394 70 408 62 405 48 425 20 442 0";
const SOUTH_LINES = [
  "M570 0 563 98 620 104 620 96 645 96 648 90 690 94 694 103 804 106 808 95 828 85",
  "M416 165 430 170 445 168 455 145 470 135 490 132 530 138 570 122 588 112 580 105 570 100",
  "M829 38 829 162 885 163 890 178 906 180 M829 158 812 160 816 215 816 260 808 265 806 330 785 350 782 370 768 375 772 428 805 430",
  "M1040 0 1046 66 1030 68 1034 148 985 154 958 158 M983 155 987 218 M940 196 968 208 975 220 984 218 990 295",
  "M725 213 812 214 M725 213 723 328 708 335 700 352 680 370 678 402 684 410",
  "M684 406 708 406 708 430 680 430",
  "M535 392 560 350 570 310 585 290 590 270 605 255 610 235 626 206 664 208 674 215 678 202 688 210 725 213",
  "M790 430 782 460 748 475 745 500 M562 622 566 650 562 690",
  "M1148 0 1158 10 1168 0 1190 15 1200 68 1226 64",
  "M690 565 700 545 720 535 M420 735 440 710 440 740",
];
const PANHANDLE = "M1250 212 1285 212 1300 196 1316 190 1320 225 1345 245 1385 280 1396 305 1405 285 1412 265 1425 262 1422 235 1450 200 1470 210 1470 235 1500 262 1540 280 1580 320 1580 540 1538 505 1520 485 1505 460 1490 455 1480 430 1450 390 1445 355 1400 330 1375 305 1340 290 1300 270 1257 262";
const ISLANDS = [
  "M323 218 340 220 350 210 372 212 376 224 385 228 384 260 372 262 364 270 350 258 335 245Z",
  "M138 112 142 125 150 138 160 148 158 154 148 148 140 130Z",
  "M848 432 856 440 850 450 862 450 866 462 876 466 862 478 850 480 858 488 850 500 862 520 866 540 852 545 845 560 830 570 820 590 806 598 800 618 790 615 796 595 780 600 778 575 768 562 770 540 785 528 800 535 800 510 812 505 825 515 820 490 838 480 832 465 845 455Z",
  "M768 640 778 628 795 626 800 635 785 634Z",
  "M344 775 350 760 362 752 370 740 405 736 412 748 412 772 390 770 372 775 365 790 350 790Z",
  "M243 818 250 806 264 804 272 815 288 825 270 842 255 850 230 858 210 862 212 852 245 845Z",
  "M185 850 190 836 204 832 210 842 205 855 190 858 178 870 165 874 168 858Z",
  "M290 802 300 794 312 802 320 800 310 812Z", "M428 800 438 794 448 808 436 812Z",
  "M540 770 548 748 560 745 575 765 580 780 565 775 558 762 545 775Z",
  "M515 738 530 724 545 738 525 746Z", "M1010 305 1020 280 1040 258 1030 285 1018 305Z",
  "M68 884 76 878 84 884 74 888Z", "M100 878 112 868 124 878 112 884Z", "M48 888 56 884 52 892Z",
  "M182 528 192 532 188 538Z", "M166 468 176 464 180 470 170 474Z", "M726 700 732 692 734 704Z",
  "M534 410 542 400 545 412 536 420Z", "M684 660 690 672 688 680Z", "M450 745 458 750 452 766Z", "M560 410 566 406 562 416Z", "M582 420 588 426 578 430Z",
];
const SPECKS = "M324 806 330 812 345 808M470 745 480 742 476 752M485 740 492 736M590 690 596 684 604 690M610 676 620 668 624 660M628 655 636 640M640 630 648 636 656 622M664 616 672 610 680 618M684 606 694 598M118 862 124 858 126 870M140 888 148 884M270 828 284 824M262 838 278 834M248 846 262 842M222 860 236 852M204 856 212 864M556 786 566 782 568 790M665 628 676 628M424 706 428 702M208 798 210 800M436 292 440 296M395 58 398 70M140 156 142 158M500 730 508 738M520 712 528 706M548 700 556 694M560 780 556 766";
const CHANNELS = "M1460 235 1480 280 1500 340 1520 390 1538 440M1430 340 1460 340 1500 350";
const FJORDS = "M1410 300 1430 285 1450 300 1440 320M1430 270 1445 290 1470 300 1465 320M1420 320 1450 330M1470 260 1490 262M1485 290 1510 330 1530 350M1500 300 1538 330M1455 370 1480 380 1490 400 1475 410M1490 370 1505 400 1500 440M1510 410 1530 450M1470 400 1500 430 1520 470M1460 365 1475 395 1490 430 1500 450M1465 380 1485 384 1496 412M1474 415 1492 418 1510 440M1480 360 1500 372 1512 400M1500 440 1520 448 1534 480M1405 310 1420 300 1432 310M1425 262 1440 262 1452 275 1480 300M1290 228 1300 240 1310 262M1305 225 1315 245 1330 232";
const KODIAK = "M800 530 806 558M818 500 822 540 812 560M845 500 850 530M836 480 852 500M785 570 800 590M830 545 862 530M840 455 868 470M1000 200 1012 240 1020 210M1030 195 1035 240 1050 210M1010 250 1030 230 1042 250M1060 220 1080 240M995 230 1000 270M1116 228 1120 244M960 290 968 310M948 306 950 322M935 325 942 340M905 345 918 360M575 690 590 680M560 705 572 698";
const DOTS = [[586, 342], [711, 342], [719, 347], [740, 366], [605, 521], [341, 693]];
const GREENS = [
  "M1512 748 1535 741 1535 814 1524 812Z", "M1480 868 1510 860 1535 852 1535 900 1472 900Z", "M1445 880 1468 876 1464 900 1442 900Z", "M1405 886 1422 884 1424 900 1406 900Z",
];
const SPECK_GREEN = "M1380 640l12 14 10-6 6 18-14 6M1405 665l20 8 10 20M1425 560l2 30M1440 680l14 10M1455 700l40 12M1470 720l30 6M1500 705l20 20M1376 660l12 20M1395 690l18 10M1505 770l8 20M1430 850l10 20";
const SPECK_BLUE = "M1344 640 1370 655 1385 680 1405 700 1408 750 1430 765 1450 750M1412 765 1392 780 1396 800 1408 830 1410 870 1425 895M1420 790 1500 792 1530 780M1430 830 1424 870M1460 780 1462 700";
const MapView = () => (
  <svg width="1293" height="986" viewBox="280 111 1293 986" role="img" aria-label="Mapa" className="shrink-0">
    <g strokeLinejoin="round">
      <path d="M780 292H877V538H800Z" fill="#f2efe9" />
      <g transform="translate(270 120) scale(.3954 .3333)">
        {GREENS.map((d) => <path key={d} d={d} fill="#bfdcb0" />)}
        <path d={SPECK_GREEN} fill="none" stroke="#cfe3c2" strokeWidth="5" strokeDasharray="3 5" />
        <path d={SPECK_BLUE} fill="none" stroke="#a8d4e4" strokeWidth="2.500" strokeDasharray="6 3" />
      </g>
      <g transform="translate(270 400) scale(.4464 .3333)">
        <path d="M1360 12 1300 35 1282 42 1278 55 1300 62 1304 90 1330 120 1345 135 1360 140Z" fill="#bfdcb0" />
        <path d="M1240 50l20-6 6 16-18 8Z" fill="#bfdcb0" />
        <path d="M1236 96 1270 95 1300 120 1315 150 1345 160 1360 180 1360 255 1320 220 1316 190 1300 195 1285 212 1250 212Z" fill="#dcebf0" />
        <path d="M1240 110l16 10 20-12 14 24 20 4 10 20 24 10M1246 140l20 14 22-8 14 30 26 6 24 20M1254 175l22 14 24-6M1330 205l24 20" fill="none" stroke="#a9d3f5" strokeWidth="6" strokeDasharray="3 5 5 2 2 6" />
        <path d="M1244 126l20 6 16 10 20 14M1258 158l24 10 10 22M1300 150l20 20 26 12" fill="none" stroke="#f2efe9" strokeWidth="4" strokeDasharray="4 4" />
        <path d="M1290 50l20 20 10 30 30 20M1310 40l30 30 10 40M1320 50l24 10M1306 76l30 26" fill="none" stroke="#e7ead8" strokeWidth="5" strokeDasharray="2 6" />
        <path d="M670 400h40v12h-40ZM790 413 780 150H1250L1255 213 1300 230 1330 240 1360 262V413Z" fill="#aad3df" />
        <g fill="none" stroke="#a592b8" strokeWidth="1.200" strokeDasharray="7 4 2 4">
          <path d="M835 410 830 380 850 330 862 300M855 410 858 370 866 300M880 408 915 385 945 358 965 350 970 325 1010 328 1045 310 1048 285 1070 265 1100 265 1118 275 1118 300 1135 312 1150 280 1180 268 1215 264 1260 282 1290 284 1352 318" />
          <ellipse cx="1072" cy="330" rx="17" ry="26" />
        </g>
      </g>
      <g fill="#cbcbcb" stroke="#585858">
        <g transform="translate(270 120) scale(.3954 .3333)">
          <path d={NORTH} vectorEffect="non-scaling-stroke" />
          <path d="M275 680 280 695 294 705 308 702 320 701 328 710 326 725 340 740 354 748 370 755 368 768 350 764 340 768 330 778 326 765 314 745 306 728 292 720 275 724 264 712 268 695Z" vectorEffect="non-scaling-stroke" />
          <path d="M402 518l6 5M421 604l1 1M588 772l8-3 4 6-7 4zM476 664l1 3M642 728l1 2M1010 132l12-3M1035 132l8 2M1052 133l3 0M1064 132l2 0M1076 138l3 0M1088 146l2 1M1076 152l5 1M1100 152l10 2" vectorEffect="non-scaling-stroke" />
        </g>
        <g transform="translate(270 400) scale(.4464 .3333)">
          <path d={SOUTH} vectorEffect="non-scaling-stroke" />
          <path d={PANHANDLE} vectorEffect="non-scaling-stroke" />
          {ISLANDS.map((d) => <path key={d} d={d} vectorEffect="non-scaling-stroke" />)}
          <path d={SPECKS} vectorEffect="non-scaling-stroke" />
          <path d="M811 360l4-2 4 4-4 4zM864 260l4-8 1 12zM1070 334l4-5M856 404l6-4 2 6zM866 402l5 2" vectorEffect="non-scaling-stroke" />
          <g fill="none">
            {SOUTH_LINES.map((d) => <path key={d} d={d} vectorEffect="non-scaling-stroke" />)}
            <path d={CHANNELS} stroke="#fff" strokeWidth="4" />
            <path d={FJORDS} vectorEffect="non-scaling-stroke" />
            <path d={KODIAK} vectorEffect="non-scaling-stroke" />
          </g>
        </g>
        <g transform="translate(270 120) scale(.3954 .3333)" fill="none">
          {NORTH_LINES.map((d) => <path key={d} d={d} vectorEffect="non-scaling-stroke" />)}
        </g>
      </g>
      <g fill="#ffff00" stroke="#222">
        {DOTS.slice(1).map(([x, y]) => <circle key={x} cx={x} cy={y} r="3.800" />)}
        <circle cx="586" cy="358" r="3.800" />
        <circle cx="691" cy="458" r="3.800" /><circle cx="689" cy="458" r="3.800" />
      </g>
    </g>
  </svg>
);

/* ---------- group stats window ---------- */
const Pie = () => (
  <svg viewBox="0 0 22 22" className="h-[22px] w-[22px] shrink-0" aria-hidden="true">
    <defs>
      <linearGradient id="po" x2="0" y2="1"><stop stopColor="#ffd042" /><stop offset="1" stopColor="#f57c00" /></linearGradient>
      <linearGradient id="pb" x2="0" y2="1"><stop stopColor="#35bde8" /><stop offset="1" stopColor="#176f92" /></linearGradient>
      <linearGradient id="pg" x2="0" y2="1"><stop stopColor="#9cc653" /><stop offset="1" stopColor="#3f6f10" /></linearGradient>
    </defs>
    <path d="M11 .5a10.500 10.500 0 0 1 0 21Z" fill="url(#po)" stroke="#e08a10" strokeWidth=".5" />
    <path d="M11 .5V11L1 15A10.500 10.500 0 0 1 11 .5Z" fill="url(#pb)" />
    <path d="M11 11v10.500A10.500 10.500 0 0 1 1 15Z" fill="url(#pg)" />
  </svg>
);
const Bars = () => (
  <svg viewBox="0 0 22 22" className="h-[22px] w-[22px] shrink-0" aria-hidden="true">
    <defs>
      <linearGradient id="br" x2="0" y2="1"><stop stopColor="#f59a42" /><stop offset="1" stopColor="#c8350a" /></linearGradient>
      <linearGradient id="bb" x2="0" y2="1"><stop stopColor="#30bdea" /><stop offset="1" stopColor="#125a78" /></linearGradient>
      <linearGradient id="bg" x2="0" y2="1"><stop stopColor="#a0cc5e" /><stop offset="1" stopColor="#44700e" /></linearGradient>
    </defs>
    <rect x=".5" y="19.500" width="21" height="2" rx="1" fill="#fff" stroke="#ccc" strokeWidth=".6" />
    <rect x="1.500" y="12" width="6" height="8.500" rx="1.500" fill="url(#br)" />
    <rect x="8" y="5.500" width="6" height="15" rx="1" fill="url(#bb)" />
    <rect x="14.500" y="1" width="6.500" height="19.500" rx="1" fill="url(#bg)" />
  </svg>
);
const Page = () => (
  <svg viewBox="0 0 22 22" className="h-[22px] w-[22px] shrink-0" aria-hidden="true">
    <path d="M3 .7h16a1.800 1.800 0 0 1 1.800 1.800V18l-3.500 3.400H3a1.800 1.800 0 0 1-1.800-1.800V2.500A1.800 1.800 0 0 1 3 .7Z" fill="#e4e4e4" stroke="#bdbdbd" />
    <path d="M4 4h14" stroke="#c2c2c2" strokeWidth="2" /><path d="M4 8h14M4 12h14M4 16h9" stroke="#9c9c9c" />
    <path d="M17.300 21.400V18h3.500" fill="#fff" stroke="#bdbdbd" />
  </svg>
);
const KIND = { p: <Pie />, d: <Page />, b: <Bars /> };
const Item = ({ k, t, active }) => (
  <li className={`flex h-[26px] shrink-0 items-center gap-[7px] pt-px pl-1 ${active ? "bg-[#efefef]" : ""}`}>{KIND[k]}<span>{t}</span></li>
);
const FIELDS = [["p", "ELEV"], ["p", "fk_region"], ["p", "ID"], ["d", "NAME"], ["d", "USE"], ["b", "average"], ["b", "count"], ["b", "max"], ["b", "median"], ["b", "min"], ["b", "stand.dev."], ["b", ""]];
const ROWS = [["WAINWRIGHT AAF", 408], ["BIG MOUNTAIN AFS", 606], ["EIELSON AFB", 501], ["BRYANT AHP", 345], ["NIKOLSKI AS", 66], ["KALAKAKET CREEK  AS", 1461], ["ELMENDORF AFB", 192], ["ALLEN AAF", 1167]];
const BOX = "border border-[#b4b4b4] bg-white";
const BTN = "rounded-sm border border-[#a9a9a9] bg-gradient-to-b from-white to-[#ececec]";

const Dialog = () => (
  <section aria-label="Group Stats" className="absolute top-[162px] left-[957px] flex w-[801px] flex-col rounded-lg border border-[#a2a2a2] bg-[#efefef] shadow-[0_16px_34px_2px_rgba(0,0,0,0.32)]">
    <header className="flex h-[30px] items-center rounded-t-lg bg-[#f3f3f3] pl-[7px]">
      <svg viewBox="0 0 16 16" className="mr-[6px] h-4 w-4"><circle cx="7.500" cy="7.500" r="5.700" fill="#fff" stroke="#7db53c" strokeWidth="3.400" /><path d="M8.500 8l3 0 4 4.500v3h-3Z" fill="#4f9a2a" stroke="#fff" strokeWidth=".5" /><circle cx="7.800" cy="7.500" r="1.900" fill="#f28c28" /></svg>
      <span className="flex-1">Group Stats</span>
      <button type="button" aria-label="Minimalizuj" className="grid h-full w-[45px] place-items-center"><svg viewBox="0 0 10 10" className="h-[10px] w-[10px]"><path d="M0 5.500h10" stroke="#000" /></svg></button>
      <button type="button" aria-label="Maksymalizuj" className="grid h-full w-[45px] place-items-center"><svg viewBox="0 0 10 10" className="h-[10px] w-[10px]"><rect x=".5" y=".5" width="9" height="9" rx="1" fill="none" stroke="#000" /></svg></button>
      <button type="button" aria-label="Zamknij" className="grid h-full w-[47px] place-items-center"><svg viewBox="0 0 10 10" className="h-[10px] w-[10px]"><path d="M0 0l10 10M10 0 0 10" stroke="#000" strokeWidth="1.100" /></svg></button>
    </header>
    <nav className="flex h-5 items-center border-b border-[#d2d2d2] pl-[9px]">
      <button type="button" className="w-[38px] text-left"><Hot t="&Data" /></button>
      <button type="button" className="w-[58px] text-left"><Hot t="Feat&ures" /></button>
      <button type="button" className="w-[58px] text-left"><Hot t="W&indow" /></button>
      <button type="button"><Hot t="He&lp" /></button>
    </nav>
    <div className="flex pl-2">
      <div className={`mt-[9px] flex h-[643px] w-[474px] flex-col ${BOX}`}>
        <table className="w-full table-fixed border-separate border-spacing-0">
          <colgroup><col className="w-[11px]" /><col className="w-[128px]" /><col className="w-[35px]" /><col /></colgroup>
          <thead>
            <tr className="h-[19px]">
              <th colSpan={2} className="border-r border-b border-[#b4b4b4] bg-gradient-to-b from-white to-[#ededed] p-0">
                <div className="flex items-center pl-[11px]"><span className="flex-1">1</span><Tri dir="up" className="mr-1 text-[#444]" /></div>
              </th>
              <th className="border-b border-[#b4b4b4] bg-gradient-to-b from-white to-[#ededed] p-0">2</th>
              <th aria-label="wolne" className="bg-[#efefef] p-0" />
            </tr>
          </thead>
          <tbody>
            <tr className="h-[30px]">
              <th className="border-r border-b border-[#b4b4b4] bg-[#f6f6f6] p-0 align-top font-normal"><span className="block h-[20px] leading-[20px]">1</span><span className="mx-auto block h-px w-[2px] bg-[#666]" /></th>
              <td className="border-r border-b border-[#c4c4c4] bg-[#f5eaea] p-0 pl-[3px] font-bold">NAME</td>
              <td className="border-r border-b border-[#c4c4c4] bg-[#f5eaea] p-0" />
            </tr>
            {ROWS.map(([n, v], i) => {
              const sel = v === 1461;
              return (
                <tr key={n} className="h-[30px]">
                  <th className={`border-r border-b border-[#b4b4b4] bg-[#f6f6f6] p-0 ${sel ? "font-bold" : "font-normal"}`}>{i + 2}</th>
                  <td className={`border-r border-b border-[#c4c4c4] p-0 pl-[3px] whitespace-pre ${sel ? "bg-[#1583dd] text-white" : "bg-[#f5eaea]"}`}>{n}</td>
                  <td className={`border-r border-b border-[#c4c4c4] p-0 pr-[3px] text-right ${sel ? "bg-[#0078d7] text-white" : "bg-white"}`}>{v}</td>
                </tr>
              );
            })}
          </tbody>
        </table>
        <div className="w-[10px] flex-1 bg-[#efefef]" />
      </div>
      <div className="flex w-[18px] items-center pl-3"><div className="h-4 w-px border-l border-dotted border-[#aaa]" /></div>
      <div className="flex flex-1 flex-col pr-[9px]">
        <div className="-mr-[7px] flex h-5 items-center justify-between"><span>Control panel</span><DockButtons /></div>
        <div className="flex flex-col pl-[6px]">
          <label htmlFor="layers" className="flex h-[27px] items-center pt-1 text-[11px]">Layers</label>
          <div className="relative">
            <select id="layers" className={`block h-[22px] w-full appearance-none pl-1 ${BTN}`}><option>airports</option></select>
            <Tri className="pointer-events-none absolute top-[7px] right-[7px] text-[#555]" />
          </div>
          <span className="flex h-[25px] items-center text-[11px]">Fields</span>
          <div className={`flex h-[300px] overflow-hidden ${BOX}`}>
            <ul className="flex h-full flex-1 flex-col overflow-hidden">
              {FIELDS.map(([k, t], i) => <Item key={i} k={k} t={t} active={t === "max"} />)}
            </ul>
            <Scroll thumb="h-[213px]" track="flex-1" />
          </div>
          <div className="grid grid-cols-2 gap-x-[6px] text-[11px]">
            <div className="flex h-[32px] items-center"><button type="button" className={`h-5 w-[38px] ${BTN}`}>Filter</button></div>
            <div className="flex items-center pt-px">Columns</div>
            <textarea aria-label="Filter" defaultValue={`"USE" = 'Military'`} className={`block h-[70px] w-full resize-none px-1 py-[3px] outline-none ${BOX}`} />
            <div className={`h-[70px] ${BOX}`} />
            <div className="flex h-[31px] items-center">Rows</div>
            <div className="flex items-center"><span className="w-[36px] shrink-0">Value</span><label className="flex items-center gap-1 whitespace-nowrap"><Check label="use NULL values" />use NULL values</label></div>
            <ul className={`h-[70px] text-[12px] ${BOX}`}><Item k="d" t="NAME" /></ul>
            <ul className={`h-[70px] text-[12px] ${BOX}`}><Item k="b" t="max" /><Item k="p" t="ELEV" /></ul>
          </div>
          <div className="mt-[6px] flex items-center justify-between text-[11px]">
            <label className="flex items-center gap-1"><Check label="Use only selected features" />Use only selected features</label>
            <button type="button" className={`h-[21px] w-[80px] ${BTN}`}>Clear</button>
          </div>
          <button type="button" className={`mt-[6px] h-[21px] text-[11px] ${BTN}`}>Calculate</button>
        </div>
      </div>
    </div>
    <footer className="flex h-[30px] items-center justify-between pt-[10px] pl-[5px] whitespace-pre">
      <span>Calculate... 100% |  generate view...100% |  done.</span>
      <svg viewBox="0 0 12 12" className="mr-[2px] h-3 w-3"><path d="M10 1h1M7 4h1M10 4h1M4 7h1M7 7h1M10 7h1M1 10h1M4 10h1M7 10h1M10 10h1" stroke="#999" strokeWidth="1.200" /></svg>
    </footer>
  </section>
);

/* ---------- page ---------- */
const BAR = "flex shrink-0 items-center overflow-hidden border-b border-[#b4b4b4] bg-gradient-to-b from-[#fbfbfb] to-[#eeeeee]";

export default function App() {
  return (
    <div className="relative flex h-screen min-h-[1000px] flex-col overflow-hidden bg-[#efefef] font-['Open_Sans','Noto_Sans',sans-serif] text-[12px] leading-4 text-black">
      <nav className="flex h-[17px] shrink-0 items-center border-b border-[#cfcfcf] pl-[6px] text-[#999]">
        {MENU.map(([t, w]) => <button type="button" key={t} className={`${w} shrink-0 text-left whitespace-nowrap`}><Hot t={t} /></button>)}
      </nav>
      <div className={`h-[31px] ${BAR}`}><Grip first />{render(TB1)}</div>
      <div className={`h-[31px] ${BAR}`}><Grip first />{render(TB2)}</div>
      <div className={`h-[30px] pt-px ${BAR}`}>
        <Grip first />
        <Slot n="scp" /><Slot n="scpz" />
        <Dark w="w-[60px]">RGB =</Dark>
        <div className="flex h-5 w-[81px] shrink-0 rounded-sm border border-[#b0b0b0] bg-white">
          <input aria-label="RGB" defaultValue="-" className="min-w-0 flex-1 pl-1 outline-none" />
          <button type="button" aria-label="lista RGB" className="grid w-[19px] place-items-center border-l border-[#c4c4c4] text-[#555]"><Tri /></button>
        </div>
        <Slot n="cum" /><Slot n="std" /><Slot n="roiz" />
        <Dark w="w-[43px]">OT</Dark>
        <Slot n="roi" /><Slot n="plus" /><Slot n="redoG" />
        <Lab w="w-[26px]">Odl.</Lab><Spin label="Odl." value="0,010000" w="w-[99px]" />
        <span className="w-px shrink-0" />
        <Lab w="w-[23px]">Min</Lab><Spin label="Min" value="60" w="w-[60px]" />
        <span className="w-px shrink-0" />
        <Lab w="w-[27px]">Max</Lab><Spin label="Max" value="100" w="w-[60px]" />
        <Slot n="prevz" />
        <Dark w="w-[64px]">Podgląd</Dark>
        <Slot n="rgbp" /><Slot n="redoG" />
        <Lab w="w-[10px]">T</Lab><Spin label="T" value="0" w="w-[51px]" />
        <Lab w="w-[10px]">S</Lab><Spin label="S" value="200" w="w-[60px]" />
        <Slot n="trash" /><Slot n="kml" />
        <Grip />
        <Slot n="raster" />
        <Spin label="wartość 0" value="0" w="w-[61px]" /><Slot n="goto" />
        <Spin label="wartość 1" value="1" w="w-[61px]" /><Slot n="goto" />
        <Spin label="wartość 2" value="2" w="w-[61px]" /><Slot n="goto" />
        <Slot n="rasterG" />
      </div>

      <main className="mt-px flex min-h-0 flex-1">
        <aside className="flex w-[273px] shrink-0 flex-col">
          <Title className="pr-[2px]">Przeglądarka</Title>
          <div className="flex h-[31px] shrink-0 items-center pb-1">{render(["addL", "reload", "funnel", "collapse", "info"])}</div>
          <ul className="min-h-0 shrink-0 grow-[567] basis-0 overflow-hidden border-y border-r border-[#b4b4b4] bg-white">
            {TREE.map(([s, ic, t, child], i) => (
              <li key={i} className={`flex h-[18px] items-center ${child ? "pl-4" : ""}`}><Twist s={s} /><Ico n={ic} /><span className="ml-[6px] whitespace-nowrap">{t}</span></li>
            ))}
          </ul>
          <div className="grid h-[7px] shrink-0 place-items-center"><div className="h-px w-4 border-t border-dotted border-[#aaa]" /></div>
          <Title className="pr-[2px]">Warstwy</Title>
          <div className="flex h-[30px] shrink-0 items-center pb-[2px]">{render(["brush", "group", "eye", "funnelA", "eps", "v", "expand", "collapse", "remove"])}</div>
          <ul className="min-h-0 shrink-0 grow-[310] basis-0 overflow-hidden border-y border-r border-[#b4b4b4] bg-white">
            {LAYERS.map(([s, on, ic, t, cls]) => (
              <li key={t} className={`flex h-[18px] items-center ${t === "airports" ? "bg-[#efefef]" : ""}`}>
                <Twist s={s} /><span className="w-[3px]" />
                <Check label={t} checked={on} />
                <Ico n={ic} className="ml-[6px] h-4 w-4" />
                <span className={`ml-[6px] flex-1 ${cls}`}>{t}</span>
                {t === "airports" && <button type="button" aria-label="Filtr" className="mr-1 grid h-[17px] w-[17px] place-items-center border border-[#d8d8d8] bg-[#f4f4f4]"><Ico n="funnelO" className="h-[14px] w-[14px]" /></button>}
              </li>
            ))}
          </ul>
        </aside>
        <div className="flex w-[6px] shrink-0 items-center justify-center"><div className="h-4 w-px border-l border-dotted border-[#aaa]" /></div>
        <section aria-label="Widok mapy" className="flex min-w-0 flex-1 items-start overflow-hidden border border-[#b4b4b4] bg-white"><MapView /></section>
        <div className="w-[6px] shrink-0" />
        <aside className="flex w-[335px] shrink-0 flex-col">
          <Title className="pr-px pl-1">Algorytmy Processingu</Title>
          <div className="flex h-[30px] shrink-0 items-center pb-[2px] pl-[3px]">{render(["gears", "py", "clock", "*docG", "/", "note", "/", "wrench"])}</div>
          <input aria-label="Szukaj algorytmu" className="h-[21px] shrink-0 rounded-sm border border-[#b4b4b4] bg-white" />
          <div className="flex min-h-0 shrink-0 grow-[241] basis-0 border border-r-0 border-[#b4b4b4] bg-white">
            <div className="flex-1" /><Scroll thumb="h-[121px]" track="flex-1" />
          </div>
          <div className="flex h-[25px] shrink-0 items-center justify-end pt-[5px] pr-px"><DockButtons /></div>
          <div className="shrink-0 grow-[320] basis-0 border border-r-0 border-[#b4b4b4] bg-white" />
          <div className="h-[5px] shrink-0" />
          <div className="shrink-0 grow-[319] basis-0 border border-r-0 border-[#b4b4b4] bg-white" />
        </aside>
      </main>

      <footer className="flex h-7 shrink-0 items-center pt-[2px] text-[11px]">
        <div className="flex h-5 w-[200px] items-center rounded-sm border border-[#b0b0b0] bg-white pl-2">
          <svg viewBox="0 0 12 12" className="mr-2 h-3 w-3"><circle cx="7" cy="5" r="3.800" fill="none" stroke="#666" /><path d="M4.300 7.700 1 11" stroke="#666" strokeWidth="1.300" /></svg>
          <input aria-label="Szukana fraza" placeholder="Szukana fraza (Ctrl+K)" className="min-w-0 flex-1 outline-none placeholder:text-[#777]" />
        </div>
        <div className="flex-1" />
        <div className="h-[18px] w-[86px] rounded-sm border border-[#b0b0b0] bg-gradient-to-b from-white to-[#f0f0f0]" />
        <label htmlFor="coord" className="w-[75px] pl-[8px] whitespace-nowrap">Współrzędne</label>
        <input id="coord" defaultValue="7843957 7546865" className="h-5 w-[102px] rounded-sm border border-[#b0b0b0] bg-white pl-[5px] outline-none" />
        <button type="button" aria-label="śledzenie" className="grid w-[24px] place-items-center"><svg viewBox="0 0 16 16" className="h-4 w-4"><path d="M6 4l6 5v4l-3 2-3-1-4-5ZM3 1l3 4M8 1l1 4M1 5l4 1" fill="#ddd" stroke="#333" strokeWidth="1.200" /><path d="M4 9l5-4M6 12l5-4" stroke="#333" /></svg></button>
        <label htmlFor="scale" className="w-[37px] pl-[7px]">Skala</label>
        <div className="flex h-5 w-[80px] rounded-sm border border-[#b0b0b0] bg-white">
          <input id="scale" defaultValue="1:13229361" className="min-w-0 flex-1 outline-none" />
          <button type="button" aria-label="lista skal" className="grid w-[17px] place-items-center border-l border-[#c4c4c4] text-[#555]"><Tri /></button>
        </div>
        <button type="button" aria-label="blokada skali" className="grid w-[33px] place-items-center pl-[5px]"><svg viewBox="0 0 14 16" className="h-4 w-[14px]"><path d="M4 7V4.500C4 1 10 1 10 4.500V7" fill="none" stroke="#777" strokeWidth="1.600" /><rect x="1.500" y="7" width="11" height="8" rx="1" fill="#6a6a6a" /></svg></button>
        <span className="w-[69px] whitespace-nowrap">Powiększenie</span>
        <Spin label="Powiększenie" value="100%" w="w-[82px]" />
        <span className="w-[47px] pl-[10px]">Obrót</span>
        <Spin label="Obrót" value="0,0 °" w="w-[83px]" />
        <label className="flex w-[82px] items-center gap-[5px] pl-[6px]"><Check label="Renderuj" checked />Renderuj</label>
        <button type="button" className="flex w-[91px] items-center">
          <svg viewBox="0 0 14 14" className="mr-[1px] h-[14px] w-[14px]"><g fill="none" stroke="#777"><circle cx="7" cy="6" r="5" /><path d="M2 6h10M7 1v10M4.500 2c-1.500 3-1.500 5 0 8M9.500 2c1.500 3 1.500 5 0 8M1 13.500h12M7 11v2" /></g></svg>
          EPSG:2964
        </button>
        <button type="button" aria-label="wiadomości" className="mr-[8px]"><svg viewBox="0 0 16 16" className="h-4 w-4"><path d="M8 1c4 0 7 2.200 7 5.500S12 12 9 12l-4 3.500V11.500C2.500 11 1 9 1 6.500 1 3.200 4 1 8 1Z" fill="#5a5a5a" /><path d="M4 6.500h1.700M7.200 6.500h1.700M10.400 6.500h1.700" stroke="#fff" strokeWidth="1.800" /></svg></button>
      </footer>
      <Dialog />
    </div>
  );
}
